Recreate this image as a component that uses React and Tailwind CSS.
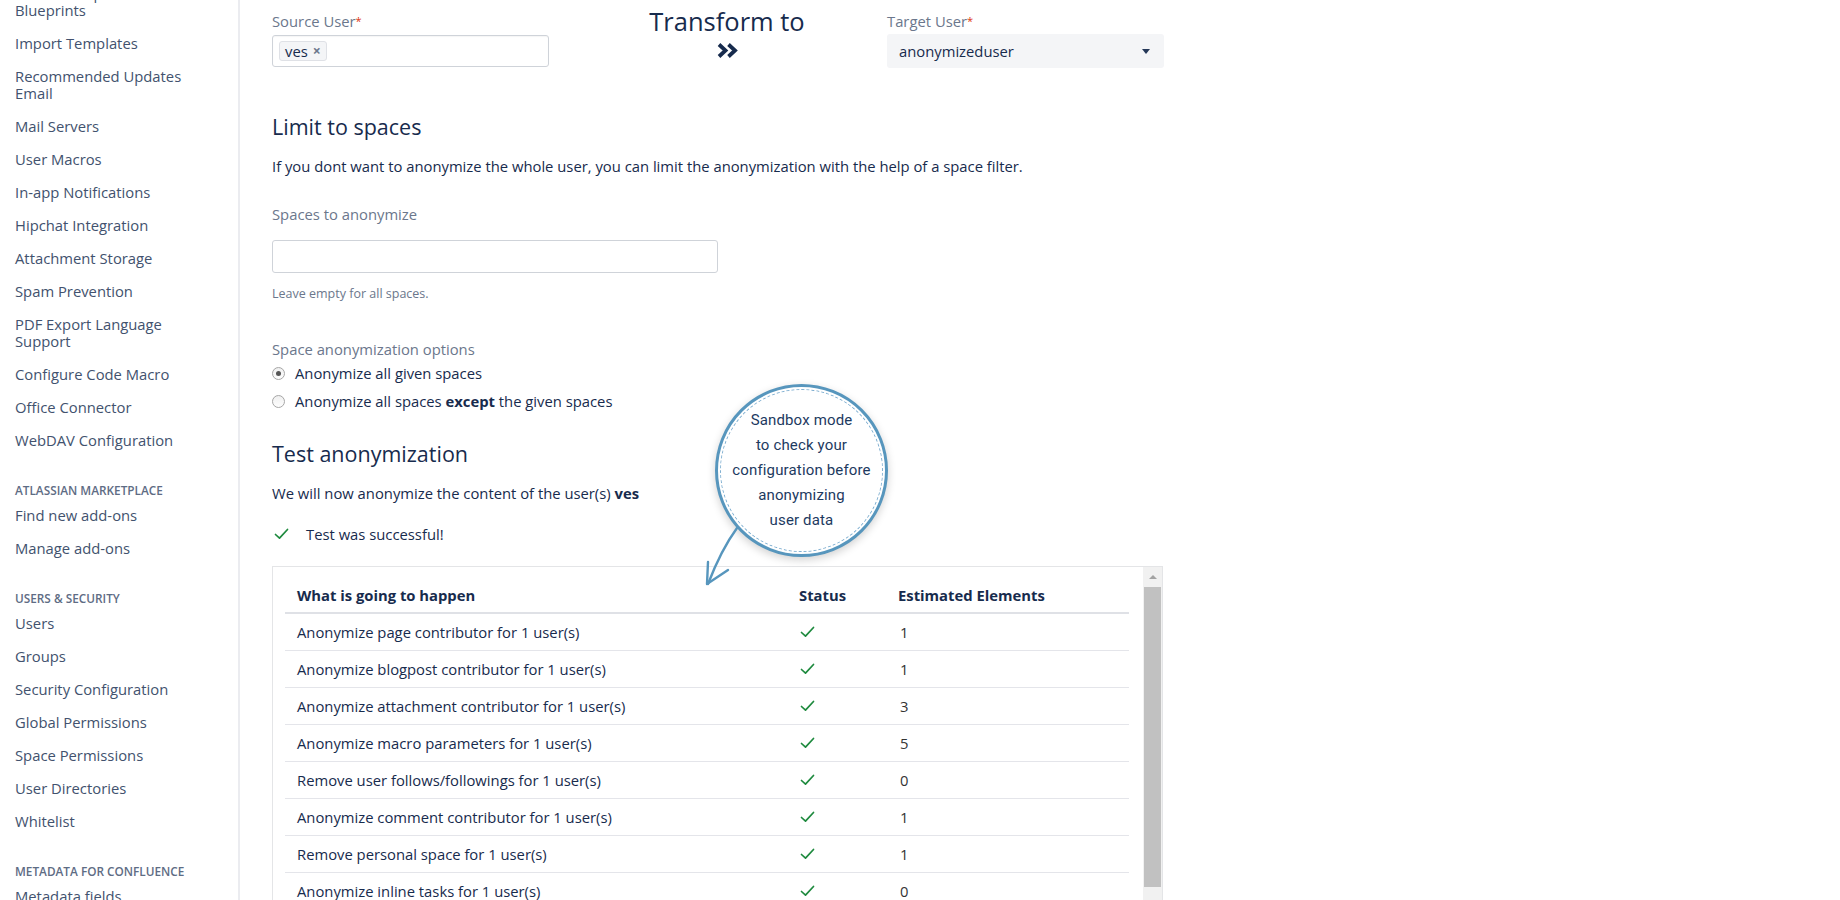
import React from "react";

const sidebarGroups = [
  {
    title: null,
    items: [
      ["Global Templates and", "Blueprints"],
      ["Import Templates"],
      ["Recommended Updates", "Email"],
      ["Mail Servers"],
      ["User Macros"],
      ["In-app Notifications"],
      ["Hipchat Integration"],
      ["Attachment Storage"],
      ["Spam Prevention"],
      ["PDF Export Language", "Support"],
      ["Configure Code Macro"],
      ["Office Connector"],
      ["WebDAV Configuration"],
    ],
  },
  {
    title: "Atlassian Marketplace",
    items: [["Find new add-ons"], ["Manage add-ons"]],
  },
  {
    title: "Users & Security",
    items: [
      ["Users"],
      ["Groups"],
      ["Security Configuration"],
      ["Global Permissions"],
      ["Space Permissions"],
      ["User Directories"],
      ["Whitelist"],
    ],
  },
  {
    title: "Metadata for Confluence",
    items: [["Metadata fields"], ["Metadata sets"]],
  },
];

const rows = [
  ["Anonymize page contributor for 1 user(s)", "1"],
  ["Anonymize blogpost contributor for 1 user(s)", "1"],
  ["Anonymize attachment contributor for 1 user(s)", "3"],
  ["Anonymize macro parameters for 1 user(s)", "5"],
  ["Remove user follows/followings for 1 user(s)", "0"],
  ["Anonymize comment contributor for 1 user(s)", "1"],
  ["Remove personal space for 1 user(s)", "1"],
  ["Anonymize inline tasks for 1 user(s)", "0"],
  ["Anonymize mentions for 1 user(s)", "0"],
];

function Check({ className = "" }) {
  return (
    <svg width="15" height="12" viewBox="0 0 15 12" className={className}>
      <path
        d="M1.5 6.5 L5.5 10.2 L13.5 1.5"
        fill="none"
        stroke="#1e8a3e"
        strokeWidth="1.7"
        strokeLinecap="round"
        strokeLinejoin="round"
      />
    </svg>
  );
}

function Sidebar() {
  return (
    <aside className="w-[240px] shrink-0 border-r-2 border-[#ebecf0] h-full overflow-hidden">
      <div className="mt-[-23px] pl-[15px]">
        {sidebarGroups.map((group, gi) => (
          <div key={gi}>
            {group.title && (
              <div className="mt-[26px] mb-[2px] h-[14px] leading-[14px] text-[11.8px] font-semibold uppercase text-[#5e6c84]">
                {group.title}
              </div>
            )}
            <ul>
              {group.items.map((lines, i) => (
                <li
                  key={i}
                  className="py-[8px] text-[14.8px] leading-[17px] text-[#42526e]"
                >
                  {lines.map((l, j) => (
                    <div key={j}>{l}</div>
                  ))}
                </li>
              ))}
            </ul>
          </div>
        ))}
      </div>
    </aside>
  );
}

function Radio({ checked, children }) {
  return (
    <label className="flex h-[28px] items-center text-[14.8px] text-[#172b4d]">
      <span className="relative mr-[10px] flex h-[13px] w-[13px] items-center justify-center rounded-full border border-[#a6a6a6] bg-gradient-to-b from-[#f0f0f0] to-[#fdfdfd]">
        {checked && (
          <span className="h-[5px] w-[5px] rounded-full bg-[#555]" />
        )}
      </span>
      <span>{children}</span>
    </label>
  );
}

function Callout() {
  return (
    <>
      <div className="absolute left-[715px] top-[384px] h-[173px] w-[173px] rounded-full border-[3px] border-[#5796bd] bg-white p-[2px] shadow-[0_3px_8px_rgba(0,0,0,0.18)]">
        <div className="flex h-full w-full flex-col items-center justify-center rounded-full border border-dashed border-[#7eaed0] text-center text-[15px] leading-[25px] tracking-[0.01em] text-[#1d3a5f] [font-family:Roboto,'Liberation_Sans',sans-serif]">
          <div>Sandbox mode</div>
          <div>to check your</div>
          <div>configuration before</div>
          <div>anonymizing</div>
          <div>user data</div>
        </div>
      </div>
      <svg
        className="absolute left-[699px] top-[522px]"
        width="44"
        height="70"
        viewBox="0 0 44 70"
      >
        <path
          d="M38 6 Q 22 28 9 62"
          fill="none"
          stroke="#5796bd"
          strokeWidth="2.4"
          strokeLinecap="round"
        />
        <path
          d="M9 40 L8 62 L29 48"
          fill="none"
          stroke="#5796bd"
          strokeWidth="2.4"
          strokeLinecap="round"
          strokeLinejoin="round"
        />
      </svg>
    </>
  );
}

function ResultTable() {
  return (
    <div className="mt-[22px] flex h-[420px] w-[891px] border border-[#e4e5e7] bg-white">
      <div className="flex-1 pl-[12px] pr-[14px]">
        <div className="flex h-[47px] items-end border-b-2 border-[#dfe1e6] pb-[6px] text-[14.8px] font-bold text-[#172b4d]">
          <div className="w-[502px] pl-[12px]">What is going to happen</div>
          <div className="w-[99px] pl-[12px]">Status</div>
          <div className="flex-1 pl-[12px]">Estimated Elements</div>
        </div>
        {rows.map(([label, count], i) => (
          <div
            key={i}
            className="flex h-[37px] items-center border-b border-[#e4e5ea] text-[14.8px] text-[#172b4d]"
          >
            <div className="w-[502px] pl-[12px]">{label}</div>
            <div className="w-[99px] pl-[13px]">
              <Check />
            </div>
            <div className="flex-1 pl-[14px] text-[#333]">{count}</div>
          </div>
        ))}
      </div>
      <div className="flex w-[19px] flex-col bg-[#f1f1f1]">
        <div className="flex h-[20px] items-center justify-center">
          <div className="h-0 w-0 border-x-[4px] border-b-[4px] border-x-transparent border-b-[#a3a3a3]" />
        </div>
        <div className="mx-[1px] h-[300px] bg-[#c1c1c1]" />
      </div>
    </div>
  );
}

export default function App() {
  return (
    <div className="relative flex h-[900px] w-[1840px] overflow-hidden bg-white [font-family:'Open_Sans','Liberation_Sans',sans-serif]">
      <Sidebar />

      <main className="flex-1 pl-[32px]">
        {/* user selection */}
        <div className="flex items-start">
          <div className="w-[277px]">
            <div className="mt-[11px] h-[20px] text-[14.8px] leading-[20px] text-[#6b778c]">
              Source User<span className="align-top text-[11px] text-[#de350b]">*</span>
            </div>
            <div className="mt-[4px] flex h-[32px] items-center rounded-[3px] border border-[#cfd3d9] px-[6px] shadow-[inset_0_1px_1px_rgba(0,0,0,0.04)]">
              <span className="flex h-[20px] items-center gap-[5px] rounded-[3px] border border-[#dfe1e6] bg-[#f4f5f7] px-[5px] text-[14.8px] text-[#172b4d]">
                ves
                <span className="text-[14px] font-bold leading-none text-[#6b778c]">×</span>
              </span>
            </div>
          </div>

          <div className="ml-[78px] w-[200px] pt-[4px] text-center">
            <div className="text-[25.5px] font-medium leading-[34px] text-[#172b4d]">
              Transform to
            </div>
            <div className="mt-[4px] flex justify-center">
              <svg width="23" height="17" viewBox="0 0 23 17">
                <path
                  d="M3 2.5 L9.5 8.5 L3 14.5 M12.5 2.5 L19 8.5 L12.5 14.5"
                  fill="none"
                  stroke="#172b4d"
                  strokeWidth="3.8"
                  strokeLinejoin="miter"
                />
              </svg>
            </div>
          </div>

          <div className="ml-[60px] w-[277px]">
            <div className="mt-[11px] h-[20px] text-[14.8px] leading-[20px] text-[#6b778c]">
              Target User<span className="align-top text-[11px] text-[#de350b]">*</span>
            </div>
            <div className="mt-[3px] flex h-[34px] items-center justify-between rounded-[3px] bg-[#f4f5f7] pl-[12px] pr-[14px] text-[14.8px] text-[#172b4d]">
              <span>anonymizeduser</span>
              <span className="h-0 w-0 border-x-[4px] border-t-[5px] border-x-transparent border-t-[#253858]" />
            </div>
          </div>
        </div>

        {/* limit to spaces */}
        <h2 className="mt-[45px] text-[21.5px] font-medium leading-[28px] text-[#172b4d]">
          Limit to spaces
        </h2>
        <p className="mt-[15px] text-[14.8px] leading-[20px] text-[#172b4d]">
          If you dont want to anonymize the whole user, you can limit the anonymization with the help of a space filter.
        </p>
        <div className="mt-[28px] text-[14.8px] leading-[20px] text-[#6b778c]">
          Spaces to anonymize
        </div>
        <div className="mt-[16px] h-[33px] w-[446px] rounded-[3px] border border-[#cfd3d9]" />
        <div className="mt-[13px] text-[12.5px] leading-[16px] text-[#6b778c]">
          Leave empty for all spaces.
        </div>

        <div className="mt-[37px] text-[14.8px] leading-[20px] text-[#6b778c]">
          Space anonymization options
        </div>
        <Radio checked>Anonymize all given spaces</Radio>
        <Radio>
          Anonymize all spaces <b className="font-bold">except</b> the given spaces
        </Radio>

        {/* test */}
        <h2 className="mt-[25px] text-[21.5px] font-medium leading-[28px] text-[#172b4d]">
          Test anonymization
        </h2>
        <p className="mt-[15px] text-[14.8px] leading-[20px] text-[#172b4d]">
          We will now anonymize the content of the user(s) <b className="font-bold">ves</b>
        </p>
        <div className="mt-[21px] flex h-[20px] items-center text-[14.8px] text-[#172b4d]">
          <Check className="ml-[2px] mr-[17px]" />
          Test was successful!
        </div>

        <ResultTable />
      </main>

      <Callout />
    </div>
  );
}
